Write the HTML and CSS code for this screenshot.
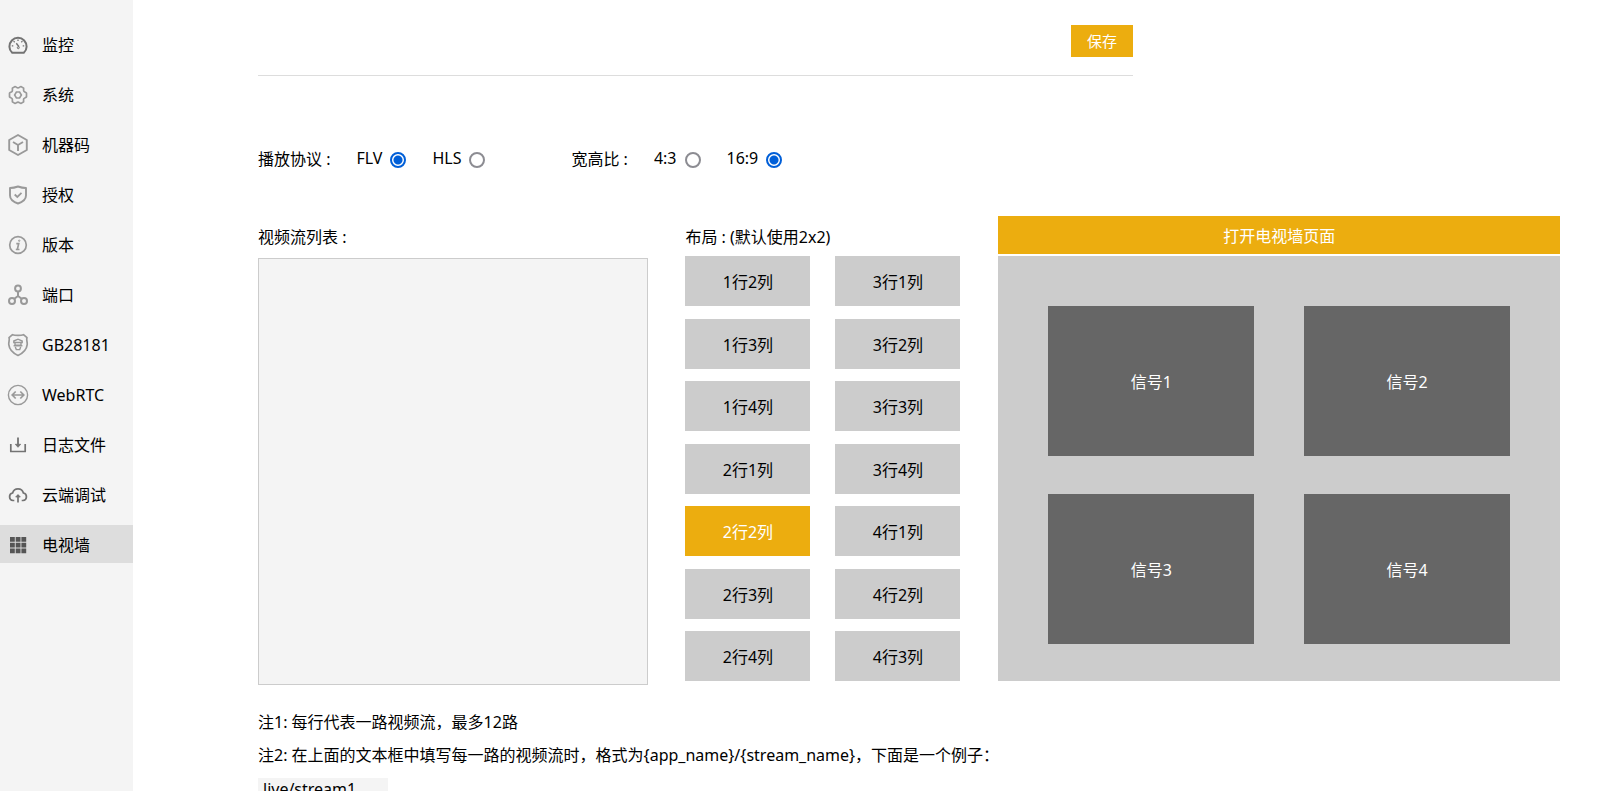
FILE: index.html
```html
<!DOCTYPE html>
<html lang="zh-CN">
<head>
<meta charset="utf-8">
<title>电视墙</title>
<link rel="stylesheet" href="styles.css">
</head>
<body>
<div class="app">
  <nav class="sidebar">
    <a class="nav-item" href="#monitor">
      <svg class="icon dark" viewBox="0 0 20 20"><path d="M4.200 17.800A8.600 8.600 0 1 1 15.800 17.800Z" stroke-width="2" stroke-linejoin="round"/><path d="M10 4.500v1.500M5.600 6.100l1.100 1.100M14.400 6.100l-1.100 1.100M3.800 10.800h1.500M14.700 10.800h1.500" stroke-width="1.300"/><path d="M8.300 8.300l2.700 3.500" stroke-width="1.400"/><circle cx="10.300" cy="12.700" r="1"/></svg>
      监控</a>
    <a class="nav-item" href="#system">
      <svg class="icon" viewBox="0 0 20 20"><path d="M7 1.500c1 .1 1.700 1.400 3 1.400s2-1.300 3-1.400l2.500 1.500c.5 1-.3 2 .3 3.200s2.100 1 2.700 2v3.600c-.6 1-2 .8-2.700 2s.2 2.200-.3 3.200L13 18.500c-1-.1-1.700-1.400-3-1.400s-2 1.300-3 1.400L4.500 17c-.5-1 .3-2-.3-3.200s-2.100-1-2.700-2V8.200c.6-1 2-.8 2.700-2S4 4 4.500 3Z" stroke-width="1.700"/><path d="M8.400 7h3.200l1.800 3-1.800 3H8.400l-1.800-3Z" stroke-width="1.600"/></svg>
      系统</a>
    <a class="nav-item" href="#machine">
      <svg class="icon" viewBox="0 0 20 20"><path d="M10 0l8.800 5v10L10 20 1.200 15V5Z" stroke-width="1.900" stroke-linejoin="round"/><path d="M5 7l5 3 5-3M10 10v6" stroke-width="1.900"/></svg>
      机器码</a>
    <a class="nav-item" href="#license">
      <svg class="icon" viewBox="0 0 20 20"><path d="M10 1.500c3 1.100 5.500 1.500 8 1.500v7.500c0 4-3.500 6.500-8 8-4.500-1.500-8-4-8-8V3c2.500 0 5-.4 8-1.500Z" stroke-width="1.900" stroke-linejoin="round"/><path d="M6.700 9.500l2.600 2.400 4.200-4" stroke-width="1.800"/></svg>
      授权</a>
    <a class="nav-item" href="#version">
      <svg class="icon" viewBox="0 0 20 20"><circle cx="10" cy="10" r="8.300" stroke-width="1.700"/><circle cx="11.200" cy="5.700" r=".7"/><path d="M8.300 8.600h2.400l-1.400 5.900h2.200M7.800 14.500h1.500" stroke-width="1.700"/></svg>
      版本</a>
    <a class="nav-item" href="#port">
      <svg class="icon" viewBox="0 0 20 20"><circle cx="10" cy="3.500" r="2.900" stroke-width="2"/><circle cx="4" cy="16" r="3" stroke-width="2"/><circle cx="16" cy="16" r="3" stroke-width="2"/><path d="M10 6.500V11l-4 3M10 11l4 3" stroke-width="2"/></svg>
      端口</a>
    <a class="nav-item" href="#gb28181">
      <svg class="icon" viewBox="0 0 20 20"><path d="M4.500-.3C7 .7 13 .7 15.500-.3l3.500 3c-1 2 .6 4.200.2 7-.6 5-4.700 8.800-9.200 10.800-4.500-2-8.600-5.800-9.200-10.800C.4 6.900 2 4.700 1 2.700Z" stroke-width="1.700" stroke-linejoin="round"/><path d="M5.800 6L10 4.200 14.200 6v1.500H5.800ZM7 8v2.300h6V8M5.600 10.700h8.800M7.300 12l1 2.600h3.400l1-2.600" stroke-width="1.400"/></svg>
      GB28181</a>
    <a class="nav-item" href="#webrtc">
      <svg class="icon" viewBox="0 0 20 20"><circle cx="10" cy="10" r="9.600" stroke-width="1.400"/><path d="M5 10h10M7.700 6.500L4.200 10l3.500 3.500M12.300 6.500l3.500 3.500-3.500 3.500" stroke-width="1.700"/></svg>
      WebRTC</a>
    <a class="nav-item" href="#logs">
      <svg class="icon dark" viewBox="0 0 20 20"><path d="M2.800 9v7.500h14.400V9" stroke-width="1.700" stroke-linejoin="round"/><path d="M10 2.500v8" stroke-width="1.800"/><path d="M7.300 9.300h5.400L10 12.300Z" fill="#737373" stroke-width=".8"/></svg>
      日志文件</a>
    <a class="nav-item" href="#cloud">
      <svg class="icon dark" viewBox="0 0 20 20"><path d="M6.300 15.500H5a3.800 3.800 0 0 1-.4-7.500 5.600 5.600 0 0 1 10.800 0 3.800 3.800 0 0 1-.4 7.500h-1.300" stroke-width="1.700"/><path d="M10 17.500V10" stroke-width="1.700"/><path d="M7.700 12L10 9.500l2.300 2.500Z" fill="#737373" stroke-width=".8"/></svg>
      云端调试</a>
    <a class="nav-item active" href="#wall" aria-current="page">
      <svg class="icon solid" viewBox="0 0 20 20"><path d="M2 2h4.800v4.800H2zM7.700 2h4.800v4.800H7.700zM13.400 2h4.800v4.800h-4.800zM2 7.700h4.800v4.800H2zM7.700 7.700h4.800v4.800H7.700zM13.400 7.700h4.800v4.800h-4.800zM2 13.400h4.800v4.800H2zM7.700 13.400h4.800v4.800H7.700zM13.400 13.400h4.800v4.800h-4.800z"/></svg>
      电视墙</a>
  </nav>

  <main class="main">
    <header class="toolbar">
      <button class="save" type="button">保存</button>
    </header>

    <div class="options">
      <div class="option-group" role="radiogroup" aria-labelledby="protocol">
        <span class="option-title" id="protocol">播放协议 :</span>
        <label class="radio">FLV <input type="radio" name="protocol" checked></label>
        <label class="radio">HLS <input type="radio" name="protocol"></label>
      </div>
      <div class="option-group" role="radiogroup" aria-labelledby="ratio">
        <span class="option-title" id="ratio">宽高比 :</span>
        <label class="radio">4:3 <input type="radio" name="ratio"></label>
        <label class="radio">16:9 <input type="radio" name="ratio" checked></label>
      </div>
    </div>

    <div class="columns">
      <section class="streams">
        <label class="heading" for="streams">视频流列表 :</label>
        <textarea class="stream-list" id="streams"></textarea>
      </section>

      <section class="layouts">
        <h2 class="heading">布局 : (默认使用2x2)</h2>
        <div class="layout-grid">
          <button class="layout" type="button">1行2列</button>
          <button class="layout" type="button">3行1列</button>
          <button class="layout" type="button">1行3列</button>
          <button class="layout" type="button">3行2列</button>
          <button class="layout" type="button">1行4列</button>
          <button class="layout" type="button">3行3列</button>
          <button class="layout" type="button">2行1列</button>
          <button class="layout" type="button">3行4列</button>
          <button class="layout selected" type="button">2行2列</button>
          <button class="layout" type="button">4行1列</button>
          <button class="layout" type="button">2行3列</button>
          <button class="layout" type="button">4行2列</button>
          <button class="layout" type="button">2行4列</button>
          <button class="layout" type="button">4行3列</button>
        </div>
      </section>

      <section class="preview">
        <button class="open-wall" type="button">打开电视墙页面</button>
        <div class="wall">
          <div class="signal">信号1</div>
          <div class="signal">信号2</div>
          <div class="signal">信号3</div>
          <div class="signal">信号4</div>
        </div>
      </section>
    </div>

    <div class="notes">
      <p class="note">注1: 每行代表一路视频流，最多12路</p>
      <p class="note">注2: 在上面的文本框中填写每一路的视频流时，格式为{app_name}/{stream_name}，下面是一个例子：</p>
      <div class="example">live/stream1</div>
    </div>
  </main>
</div>
</body>
</html>
```
FILE: styles.css
```css
* {
  box-sizing: border-box;
}

body {
  margin: 0;
  font-family: "Noto Sans", "Noto Sans CJK SC", sans-serif;
  font-size: 16px;
  line-height: 24px;
  color: #000;
  background: #fff;
}

button,
textarea {
  font: inherit;
}

button {
  border: 0;
  padding: 0;
  cursor: pointer;
}

.app {
  display: flex;
  height: 100vh;
}

.sidebar {
  flex: none;
  width: 133px;
  padding-top: 25px;
  background: #f4f4f4;
  display: flex;
  flex-direction: column;
  gap: 12px;
}

.nav-item {
  display: flex;
  align-items: center;
  gap: 14px;
  height: 38px;
  padding: 2px 0 0 8px;
  color: #000;
  text-decoration: none;
  white-space: nowrap;
}

.nav-item.active {
  background: #ddd;
}

.icon {
  flex: none;
  width: 20px;
  height: 20px;
  fill: none;
  stroke: #999;
  overflow: visible;
}

.icon.dark {
  stroke: #737373;
}

.icon.solid {
  fill: #555;
  stroke: none;
}

.main {
  flex: 1;
  min-width: 0;
  padding: 0 53px 0 125px;
  overflow: auto;
  scrollbar-width: none;
}

.toolbar {
  display: flex;
  justify-content: flex-end;
  max-width: 875px;
  padding: 25px 0 18px;
  border-bottom: 1px solid #ddd;
}

.save {
  width: 62px;
  height: 32px;
  font-size: 15px;
  color: #fff;
  background: #ecad0f;
}

.options {
  display: flex;
  gap: 86px;
  padding-top: 69px;
}

.option-group {
  display: flex;
  align-items: center;
  gap: 26px;
}

.option-title {
  padding-top: 2px;
}

.radio {
  display: flex;
  align-items: center;
  gap: 8px;
}

.radio input {
  appearance: none;
  width: 16px;
  height: 16px;
  margin: 3px 0 0;
  border: 2px solid #8c8c92;
  border-radius: 50%;
  background: #fff;
}

.radio input:checked {
  border-color: #005fd8;
  background: radial-gradient(circle, #005fd8 4px, #fff 5px);
}

.columns {
  display: grid;
  grid-template-columns: 390fr 275px 562fr;
  column-gap: 37px;
  padding-top: 45px;
}

.heading {
  display: block;
  margin: 0;
  padding: 9px 0 7px;
  font-size: 16px;
  font-weight: 400;
  line-height: 24px;
}

.stream-list {
  display: block;
  width: 100%;
  height: 427px;
  margin-top: 2px;
  padding: 8px;
  border: 1px solid #ccc;
  background: #f4f4f4;
  resize: none;
}

.layout-grid {
  display: grid;
  grid-template-columns: 1fr 1fr;
  column-gap: 25px;
  align-content: space-between;
  height: 425px;
}

.layout {
  height: 50px;
  padding-top: 2px;
  color: #000;
  background: #ccc;
}

.layout.selected {
  color: #fff;
  background: #ecad0f;
}

.preview {
  padding-left: 1px;
}

.open-wall {
  display: block;
  width: 100%;
  height: 38px;
  margin-bottom: 2px;
  padding-top: 2px;
  color: #fff;
  background: #ecad0f;
}

.wall {
  display: grid;
  grid-template-columns: 1fr 1fr;
  gap: 38px 50px;
  padding: 50px 50px 37px;
  background: #ccc;
}

.signal {
  display: flex;
  align-items: center;
  justify-content: center;
  height: 150px;
  padding-top: 2px;
  color: #fff;
  background: #666;
}

.notes {
  padding-top: 21px;
}

.note {
  margin: 0;
  line-height: 33px;
}

.example {
  width: 130px;
  margin-top: 6px;
  padding: 0 5px;
  line-height: 22px;
  background: #f4f4f4;
}
```
